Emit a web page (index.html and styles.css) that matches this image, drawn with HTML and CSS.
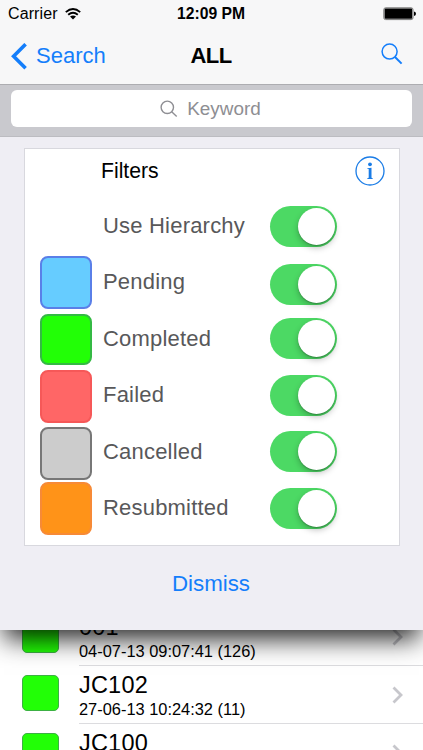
FILE: index.html
```html
<!DOCTYPE html>
<html lang="en">
<head>
    <meta charset="UTF-8">
    <meta name="viewport" content="width=device-width, initial-scale=1.0">
    <title>ALL</title>
    <link rel="stylesheet" href="styles.css">
</head>
<body>
    <header class="top">
        <div class="status">
            <div class="carrier">
                <span>Carrier</span>
                <svg class="wifi" width="16" height="12" viewBox="0 0 16 12">
                    <path d="M0.8,4.1 Q8,-2 15.2,4.1" class="wave"/>
                    <path d="M3.2,6.7 Q8,2.6 12.8,6.7" class="wave"/>
                    <path d="M5,8.6 Q8,6.2 11,8.6 L8,11.6 Z"/>
                </svg>
            </div>
            <div class="time">12:09 PM</div>
            <svg class="battery" width="34" height="14" viewBox="0 0 34 14">
                <rect x="0.8" y="0.8" width="29.2" height="11.8" rx="1.8" class="battery-case"/>
                <rect x="1.6" y="1.6" width="27.6" height="10.2" rx="0.8"/>
                <path d="M31,4.5 Q33,4.8 33,6.7 Q33,8.6 31,8.9 Z"/>
            </svg>
        </div>
        <nav class="nav">
            <a class="back">
                <svg width="16" height="27" viewBox="0 0 16 27">
                    <path d="M14.6,1.2 L2.6,13.2 L14.6,25.2" class="back-arrow"/>
                </svg>
                <span>Search</span>
            </a>
            <h1 class="title">ALL</h1>
            <svg class="find" width="22" height="22" viewBox="0 0 22 22">
                <circle cx="8.6" cy="8.6" r="7.5"/>
                <path d="M14,14 L20.6,20.6" class="handle"/>
            </svg>
        </nav>
    </header>

    <div class="searchbar">
        <div class="field">
            <svg width="18" height="18" viewBox="0 0 18 18">
                <circle cx="7.3" cy="7.3" r="6.2"/>
                <path d="M11.7,11.7 L16.7,16.4"/>
            </svg>
            <span>Keyword</span>
        </div>
    </div>

    <section class="panel">
        <div class="card">
            <div class="card-head">
                <h2 class="card-title">Filters</h2>
                <svg class="info" width="30" height="30" viewBox="0 0 30 30">
                    <circle cx="15" cy="15" r="14" class="ring"/>
                    <circle cx="15" cy="8.3" r="1.9"/>
                    <path d="M12.4,12.2 L16.5,11.7 V21.8 L17.7,22.2 V23 H12.3 V22.2 L13.7,21.8 V13.1 L12.4,12.9 Z"/>
                </svg>
            </div>
            <div class="row">
                <span></span>
                <span class="label">Use Hierarchy</span>
                <span class="switch"></span>
            </div>
            <div class="row">
                <span class="swatch pending"></span>
                <span class="label">Pending</span>
                <span class="switch"></span>
            </div>
            <div class="row">
                <span class="swatch completed"></span>
                <span class="label">Completed</span>
                <span class="switch"></span>
            </div>
            <div class="row">
                <span class="swatch failed"></span>
                <span class="label">Failed</span>
                <span class="switch"></span>
            </div>
            <div class="row">
                <span class="swatch cancelled"></span>
                <span class="label">Cancelled</span>
                <span class="switch"></span>
            </div>
            <div class="row">
                <span class="swatch resubmitted"></span>
                <span class="label">Resubmitted</span>
                <span class="switch"></span>
            </div>
        </div>
        <a class="dismiss">Dismiss</a>
    </section>

    <ul class="jobs">
        <li class="job">
            <span class="job-status"></span>
            <div class="job-body">
                <div>
                    <div class="job-name">001</div>
                    <div class="job-date">04-07-13 09:07:41 (126)</div>
                </div>
                <svg class="chevron" width="12" height="18" viewBox="0 0 12 18"><path d="M1.5,1.5 L9,9 L1.5,16.5"/></svg>
            </div>
        </li>
        <li class="job">
            <span class="job-status"></span>
            <div class="job-body">
                <div>
                    <div class="job-name">JC102</div>
                    <div class="job-date">27-06-13 10:24:32 (11)</div>
                </div>
                <svg class="chevron" width="12" height="18" viewBox="0 0 12 18"><path d="M1.5,1.5 L9,9 L1.5,16.5"/></svg>
            </div>
        </li>
        <li class="job">
            <span class="job-status"></span>
            <div class="job-body">
                <div>
                    <div class="job-name">JC100</div>
                </div>
                <svg class="chevron" width="12" height="18" viewBox="0 0 12 18"><path d="M1.5,1.5 L9,9 L1.5,16.5"/></svg>
            </div>
        </li>
    </ul>
</body>
</html>
```
FILE: styles.css
```css
* {
    box-sizing: border-box;
}
body {
    margin: 0;
    height: 750px;
    overflow: hidden;
    background-color: white;
    font-family: "Liberation Sans", Arial, sans-serif;
    color: #000;
}
svg {
    display: block;
}
.top {
    height: 85px;
    background-color: #f7f7f8;
    border-bottom: 1px solid #adadb1;
}
.status {
    display: grid;
    grid-template-columns: 1fr auto 1fr;
    align-items: center;
    height: 28px;
    padding: 0 8px;
}
.carrier {
    display: flex;
    align-items: center;
    gap: 7px;
    font-size: 16px;
    letter-spacing: 0.1px;
}
.wave {
    fill: none;
    stroke: #000;
    stroke-width: 1.9;
}
.time {
    margin-right: 1px;
    font-size: 15.7px;
    font-weight: bold;
}
.battery {
    justify-self: end;
    margin-right: -2px;
}
.battery-case {
    fill: none;
    stroke: #777;
    stroke-width: 1;
}
.nav {
    display: grid;
    grid-template-columns: 1fr auto 1fr;
    align-items: center;
    height: 56px;
    padding: 0 11px;
}
.back {
    display: flex;
    align-items: center;
    gap: 9px;
    font-size: 22px;
    color: #147efb;
}
.back-arrow {
    fill: none;
    stroke: #147efb;
    stroke-width: 3.6;
}
.title {
    margin: 0 1px 0 0;
    font-size: 22px;
    font-weight: bold;
    letter-spacing: -0.6px;
}
.find {
    justify-self: end;
    margin: -4px 9px 0 0;
    fill: none;
    stroke: #147efb;
    stroke-width: 1.5;
}
.handle {
    stroke-width: 2;
}
.searchbar {
    height: 52px;
    padding: 5px 11px 0;
    background-color: #c9c9ce;
    border-bottom: 1px solid #bcbcc1;
}
.field {
    display: flex;
    justify-content: center;
    align-items: center;
    gap: 9px;
    height: 37px;
    padding-right: 2px;
    border-radius: 6px;
    background-color: white;
    font-size: 18.9px;
    color: #8e8e93;
}
.field svg {
    fill: none;
    stroke: #8e8e93;
    stroke-width: 1.4;
}
.panel {
    position: relative;
    z-index: 1;
    height: 493px;
    padding: 11px 23px 0 24px;
    background-color: #efeef4;
    box-shadow: 0 13px 24px -4px rgba(0, 0, 0, 0.85);
    clip-path: inset(0 0 -60px 0);
}
.card {
    height: 398px;
    border: 1px solid #d8d8de;
    background-color: white;
}
.card-head {
    display: flex;
    justify-content: space-between;
    align-items: center;
    height: 43px;
    padding: 0 14px 0 76px;
}
.card-title {
    font-size: 21.2px;
    font-weight: normal;
    line-height: 25px;
    margin: 0;
}
.info {
    fill: #1a7ce6;
}
.ring {
    fill: none;
    stroke: #1a7ce6;
    stroke-width: 1.3;
}
.row {
    display: grid;
    grid-template-columns: 52px 155px 68px;
    column-gap: 11px;
    align-items: center;
    height: 56.4px;
    padding-left: 15px;
}
.card-head + .row {
    margin-top: 6px;
}
.label {
    font-size: 22px;
    letter-spacing: 0.2px;
    color: #58585a;
}
.switch {
    display: flex;
    justify-content: flex-end;
    width: 67px;
    height: 41px;
    margin-left: 1px;
    padding: 2px;
    border-radius: 21px;
    background-color: #4cd964;
}
.switch::after {
    content: "";
    width: 37px;
    height: 37px;
    border-radius: 50%;
    background-color: white;
    box-shadow: 0 3px 6px rgba(0, 0, 0, 0.25), 0 1px 1px rgba(0, 0, 0, 0.2);
}
.pending ~ .switch {
    margin-top: 3px;
}
.pending ~ .label {
    margin-top: -2px;
}
.swatch {
    height: 53px;
    border: 2px solid;
    border-radius: 8px;
}
.pending {
    background-color: #66ccff;
    border-color: #5a7fe8;
}
.completed {
    height: 51px;
    margin-top: 1px;
    background-color: #22ff06;
    border-color: #34b944;
}
.failed {
    margin-top: 2px;
    background-color: #ff6666;
    border-color: #f65858;
}
.cancelled {
    margin-top: 3px;
    background-color: #cccccc;
    border-color: #777;
}
.resubmitted {
    margin-top: 1px;
    background-color: #ff9318;
    border-color: #f78a36;
}
.dismiss {
    display: block;
    margin: 25px 2px 0 0;
    font-size: 22.3px;
    line-height: 26px;
    text-align: center;
    color: #147efb;
}
.jobs {
    margin: -22px 0 0;
    padding: 0;
    list-style: none;
}
.job {
    display: flex;
    height: 58px;
    padding-left: 22px;
}
.job-status {
    width: 37px;
    height: 36px;
    margin: 9px 20px 0 0;
    border: 1px solid #3cb043;
    border-radius: 5px;
    background-color: #22ff06;
}
.job-body {
    flex: 1;
    display: flex;
    justify-content: space-between;
    padding-right: 19px;
    border-bottom: 1px solid #dcdcdf;
}
.job-name {
    margin-top: 6px;
    font-size: 23.5px;
    line-height: 26px;
    letter-spacing: 0.2px;
}
.job-date {
    margin-top: 2px;
    font-size: 16.4px;
    line-height: 18px;
}
.chevron {
    margin-top: 20px;
    fill: none;
    stroke: #c7c7cc;
    stroke-width: 2.8;
}
```
